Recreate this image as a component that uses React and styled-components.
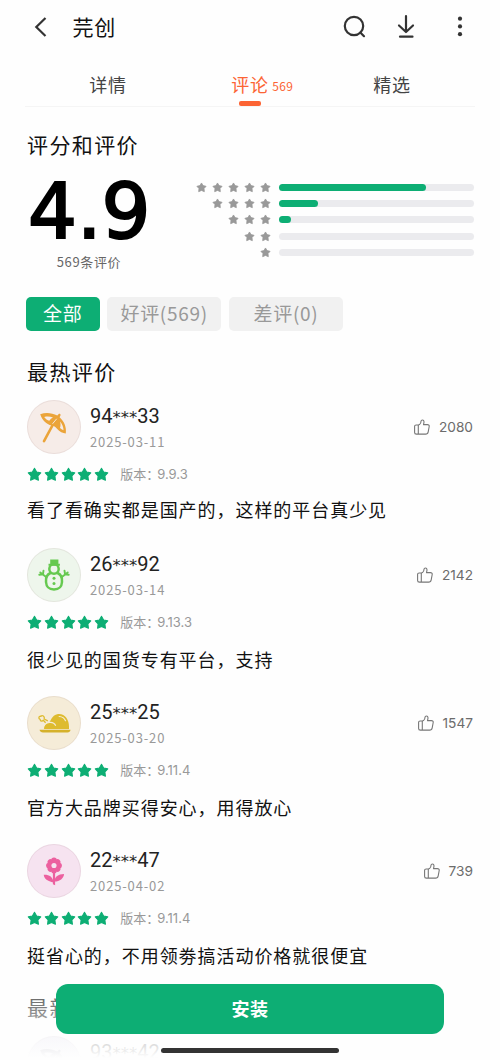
import React from "react";
import styled, { createGlobalStyle } from "styled-components";

const GREEN = "#0dae74";
const ORANGE = "#fc6434";

const GlobalStyle = createGlobalStyle`
  * { box-sizing: border-box; }
  body {
    margin: 0;
    background: #fefefe;
    font-family: "Noto Sans CJK SC", "Noto Sans", sans-serif;
    color: #111;
  }
`;

const Screen = styled.main`
  position: relative;
  width: 500px;
  height: 1060px;
  overflow: hidden;
  background: #fefefe;
`;

const Header = styled.header`
  display: flex;
  align-items: center;
  height: 54px;
  padding: 0 30px 0 34px;
`;

const AppName = styled.h1`
  flex: 1;
  margin: 0 0 2px 24.5px;
  font-size: 21px;
  line-height: 30px;
  font-weight: 400;
  letter-spacing: 0.8px;
`;

const Actions = styled.div`
  display: flex;
  align-items: center;
`;

const Action = styled.span`
  display: flex;
  margin-left: ${(p) => p.$gap}px;
`;

const Tabs = styled.nav`
  display: grid;
  grid-template-columns: repeat(3, 142px);
  justify-content: center;
  height: 53px;
  margin: 0 25px;
  border-bottom: 1px solid #f5f5f5;
`;

const Tab = styled.div`
  display: flex;
  flex-direction: column;
  align-items: center;
  justify-content: space-between;
  padding-top: 17px;
  color: ${(p) => (p.$active ? ORANGE : "#444")};
  &::after {
    content: "";
    width: 22px;
    height: 5px;
    border-radius: 2px;
    background: ${(p) => (p.$active ? ORANGE : "transparent")};
  }
`;

const TabLabel = styled.div`
  position: relative;
  font-size: 18px;
  line-height: 26px;
  letter-spacing: 0.7px;
`;

const TabCount = styled.span`
  position: absolute;
  left: 41px;
  top: 2px;
  font-size: 12px;
  letter-spacing: 0.3px;
`;

const SectionTitle = styled.h2`
  margin: 0;
  padding-left: 27px;
  font-size: 21px;
  line-height: 32px;
  font-weight: 400;
  letter-spacing: 1.4px;
  color: #111;
`;

const RatingTitle = styled(SectionTitle)`
  padding-top: 21px;
`;

const HotTitle = styled(SectionTitle)`
  padding-bottom: 13px;
`;

const LatestTitle = styled(SectionTitle)`
  padding-bottom: 13px;
  color: #333;
`;

const Summary = styled.section`
  display: flex;
  justify-content: space-between;
  height: 116px;
  padding: 0 26.5px 0 28px;
`;

const ScoreBlock = styled.div`
  display: flex;
  flex-direction: column;
  width: 122px;
`;

const Score = styled.div`
  height: 92px;
  padding-top: 6px;
  font-family: "DejaVu Sans", sans-serif;
  font-size: 77px;
  line-height: 92px;
  font-weight: 400;
  -webkit-text-stroke: 2.2px #000;
  white-space: nowrap;
  color: #000;
`;

const ScoreCaption = styled.div`
  text-align: center;
  font-size: 13px;
  line-height: 20px;
  letter-spacing: 0.65px;
  color: #666;
`;

const Distribution = styled.div`
  display: flex;
  flex-direction: column;
  padding-top: 19px;
`;

const DistributionRow = styled.div`
  display: flex;
  align-items: center;
  justify-content: flex-end;
  gap: 8px;
  height: 16.4px;
`;

const StarRow = styled.div`
  display: flex;
  align-items: center;
  gap: ${(p) => p.$gap}px;
`;

const Track = styled.div`
  width: 194.5px;
  height: 7px;
  border-radius: 4px;
  background: #ebebee;
`;

const Fill = styled.div`
  height: 7px;
  border-radius: 4px;
  background: ${GREEN};
`;

const Filters = styled.div`
  display: flex;
  gap: 7.5px;
  margin-top: 21px;
  padding-left: 26px;
`;

const Filter = styled.button`
  width: ${(p) => (p.$active ? 73.5 : 114.3)}px;
  height: 34px;
  padding: 0 0 2px;
  border: 0;
  border-radius: 5px;
  font-family: inherit;
  font-size: 19px;
  line-height: 30px;
  letter-spacing: 0.7px;
  color: ${(p) => (p.$active ? "#fff" : "#999")};
  background: ${(p) => (p.$active ? GREEN : "#f1f1f1")};
`;

const HotSection = styled.section`
  padding-top: 24px;
`;

const Review = styled.article`
  height: 148px;
  padding: 0 27px 0 26.5px;
`;

const ReviewHead = styled.div`
  display: flex;
  height: 54px;
`;

const Avatar = styled.div`
  display: flex;
  align-items: center;
  justify-content: center;
  width: 54px;
  height: 54px;
  border: 1px solid rgba(120, 80, 80, 0.09);
  border-radius: 50%;
  background: ${(p) => p.$bg};
`;

const Author = styled.div`
  flex: 1;
  padding-left: 9.5px;
`;

const UserName = styled.div`
  height: 29px;
  padding-top: 3px;
  font-family: Roboto, "Noto Sans CJK SC", sans-serif;
  font-size: 20px;
  line-height: 26px;
  color: #222;
`;

const Mask = styled.span`
  font-family: "DejaVu Sans", sans-serif;
  font-size: 16.5px;
  line-height: 20px;
`;

const ReviewDate = styled.div`
  padding-top: 3px;
  font-size: 13px;
  line-height: 20px;
  letter-spacing: 0.85px;
  color: #999;
`;

const Likes = styled.div`
  display: flex;
  align-items: center;
  gap: 9px;
  font-family: Inter, sans-serif;
  font-size: 13.7px;
  color: #6c6c6c;
`;

const Meta = styled.div`
  display: flex;
  align-items: center;
  height: 20px;
  margin-top: 10px;
  padding-left: 0.5px;
`;

const Version = styled.div`
  display: flex;
  margin-left: 11px;
  font-size: 13px;
  line-height: 20px;
  color: #999;
`;

const VersionNumber = styled.span`
  margin-left: -2px;
  font-family: Inter, sans-serif;
  font-size: 13px;
`;

const Comment = styled.p`
  margin: ${(p) => p.$top}px 0 0 0.5px;
  font-size: 18px;
  line-height: 28px;
  letter-spacing: 0.95px;
  white-space: nowrap;
  color: #111;
`;

const Latest = styled.section`
  margin-top: -1px;
`;

const BottomBar = styled.footer`
  position: absolute;
  left: 0;
  right: 0;
  bottom: 0;
  display: flex;
  flex-direction: column;
  align-items: center;
  height: 90px;
  padding-top: 14px;
  background: linear-gradient(
    to bottom,
    rgba(254, 254, 254, 0) 0,
    rgba(254, 254, 254, 0.35) 35px,
    rgba(254, 254, 254, 0.8) 70px,
    rgba(254, 254, 254, 1) 88px
  );
`;

const InstallButton = styled.button`
  width: 388.5px;
  height: 49.5px;
  padding: 0 0 1px;
  border: 0;
  border-radius: 12px;
  font-family: inherit;
  font-size: 18px;
  font-weight: 700;
  letter-spacing: 0.5px;
  color: #fff;
  background: ${GREEN};
`;

const HomeIndicator = styled.div`
  width: 178px;
  height: 4.5px;
  margin-top: 14.5px;
  border-radius: 3px;
  background: #333;
`;

const Star = ({ size, color }) => (
  <svg width={size} height={size} viewBox="0 0 24 24">
    <path
      d="M12 2.100L15.400 7.900 22 9.400 17.500 14.400 18.200 21.100 12 18.400 5.800 21.100 6.500 14.400 2 9.400 8.600 7.900z"
      fill={color}
      stroke={color}
      strokeWidth="1.700"
      strokeLinejoin="round"
    />
  </svg>
);

const Stars = ({ count, size, gap, color }) => (
  <StarRow $gap={gap}>
    {Array.from({ length: count }, (_, i) => (
      <Star key={i} size={size} color={color} />
    ))}
  </StarRow>
);

const BackIcon = () => (
  <svg width="14" height="20" viewBox="0 0 14 20" fill="none">
    <path d="M11.500 1L2.300 10l9.200 9" stroke="#333" strokeWidth="2.200" />
  </svg>
);

const SearchIcon = () => (
  <svg width="24" height="24" viewBox="0 0 24 24" fill="none" stroke="#333" strokeWidth="2.200" strokeLinecap="round">
    <circle cx="11" cy="11" r="9.200" />
    <path d="M17.300 17.500l3.700 3.700" />
  </svg>
);

const DownloadIcon = () => (
  <svg width="20" height="24" viewBox="0 0 20 24" fill="none" stroke="#333" strokeWidth="2.200" strokeLinecap="round">
    <path d="M10 1.200v15.500M3 10.500l7 6.500 7-6.500" strokeLinejoin="round" />
    <path d="M4 21.700h12.500" />
  </svg>
);

const MoreIcon = () => (
  <svg width="20" height="24" viewBox="0 0 20 24" fill="#333">
    <circle cx="10" cy="3.700" r="2.100" />
    <circle cx="10" cy="11.400" r="2.100" />
    <circle cx="10" cy="19.200" r="2.100" />
  </svg>
);

const ThumbIcon = () => (
  <svg width="16" height="17" viewBox="0 0 16 17" fill="none" stroke="#777" strokeWidth="1.100" strokeLinejoin="round">
    <path d="M4.300 6l1.200-.4C6.800 4.700 7 3.400 7 2.300 7 .6 9.900.2 10 2.700c0 1.200-.3 2-.5 2.900h3.900c1.300 0 2 .8 1.800 1.900l-1 5.300c-.3 1.600-1.200 2.300-2.600 2.300H2.400c-1.200 0-1.800-.6-1.800-1.700V7.600C.6 6.600 1.200 6 2.200 6z" />
    <path d="M4.300 6v9.100" />
  </svg>
);

const UmbrellaIcon = ({ color = "#eba43a", cut = "#f6ece8" }) => (
  <svg width="32" height="32" viewBox="0 0 32 32">
    <path d="M15.500 12.500L6 30.200" stroke={color} strokeWidth="2.600" strokeLinecap="round" />
    <path
      d="M2.200 3.200C8 1.300 14 1.900 19.300 4.600l1.900-2 1.600 1.200-1.200 2.400c4.700 4.300 7 9.800 6.200 16.200-3-.1-6.100-1.600-8.800-4.600-1.500-2-3-3-5.500-3.400C8.500 13.400 4.300 9.200 2.200 3.200z"
      fill={color}
    />
    <path d="M6.200 6c3.200-.8 6.200-.5 8.800.6-1.500.7-2.700 1.800-3.700 3.200C9.300 9.200 7.500 7.900 6.200 6zM22 10.500c2.300 2.600 3.500 5.700 3.500 8.700-1.300-.5-2.500-1.200-3.500-2.100.7-2.200.7-4.400 0-6.600z" fill={cut} />
    <path d="M18.700 7.800l-4.200 5" stroke={cut} strokeWidth="0.900" />
  </svg>
);

const SnowmanIcon = () => (
  <svg width="32" height="32" viewBox="0 0 32 32" fill="none" stroke="#66c950" strokeWidth="2.500" strokeLinecap="round">
    <path d="M12.200.5h8.200v4.200h1.500v2H10.500v-2h1.700z" fill="#66c950" stroke="none" />
    <circle cx="16" cy="10" r="4.700" />
    <path d="M12.500 14c-3.700 1.500-4.900 4.500-4.500 9 .4 5.300 2.500 7.400 8 7.400s7.600-2.100 8-7.400c.4-4.500-.8-7.500-4.500-9" />
    <path d="M8.500 18.300L2.300 13.400M5 15.200l-3.700.6M5 15.200l.5-3.600M23.500 18.300l6.200-4.900M27 15.200l3.700.6M27 15.200l-.5-3.600" strokeWidth="1.900" />
    <circle cx="16" cy="19.300" r="1.500" fill="#66c950" stroke="none" />
    <circle cx="16" cy="24.500" r="1.500" fill="#66c950" stroke="none" />
  </svg>
);

const RoastIcon = () => (
  <svg width="34" height="24" viewBox="0 0 34 24">
    <path d="M10.500 13C14 11.500 14 4 21 3c7-.6 11 5.500 11 12.500v2.500H6.800z" fill="#debb2f" />
    <path d="M6.300 18c.2-3.500 2.700-6.200 6.200-6.600 3-.3 5.200 1 6.200 3.300" fill="#debb2f" stroke="#f5ecd8" strokeWidth="1.100" />
    <path d="M10.800 9.800L7.200 8C8 5.200 5.200 3.800 3.900 5.300 1.600 4.800 1.200 7.500 3.100 8.300c.3 2.300 2.400 2.100 3.200.9l2.300 2.600" fill="none" stroke="#debb2f" strokeWidth="1.300" strokeLinejoin="round" />
    <path d="M22.200 5.500c3 .2 5.200 1.700 6.300 4.200" fill="none" stroke="#f5ecd8" strokeWidth="1.200" strokeLinecap="round" />
    <path d="M2.500 18.800h31c-.2 1.900-1.400 2.700-3 2.700H6c-1.800 0-3-.8-3.500-2.700z" fill="#d5b12b" />
  </svg>
);

const FlowerIcon = () => (
  <svg width="22" height="30" viewBox="0 0 24 32" fill="#ec609f">
    <g>
      {[0, 45, 90, 135, 180, 225, 270, 315].map((a) => (
        <circle key={a} cx="12" cy="4.500" r="3.100" transform={`rotate(${a} 12 10)`} />
      ))}
      <circle cx="12" cy="10" r="6.300" />
    </g>
    <circle cx="12" cy="10" r="2.800" fill="#f6e3f0" />
    <path d="M10.800 17h2.400v14.500l-2.400-1z" />
    <path d="M11.500 28.500C5 27.500 1.200 24.500.8 20.200c5.700-.3 10.200 2.300 10.700 8.300zM12.500 27.500c.2-5.300 4-8.300 10.500-8.300-.5 5-4.500 8-10.500 8.300z" />
  </svg>
);

const levels = [
  { stars: 5, value: 147 },
  { stars: 4, value: 39 },
  { stars: 3, value: 12 },
  { stars: 2, value: 0 },
  { stars: 1, value: 0 },
];

const reviews = [
  { name: ["94", "33"], date: "2025-03-11", likes: 2080, version: "9.9.3", text: "看了看确实都是国产的，这样的平台真少见", bg: "#f6ece8", icon: <UmbrellaIcon />, top: 10.5 },
  { name: ["26", "92"], date: "2025-03-14", likes: 2142, version: "9.13.3", text: "很少见的国货专有平台，支持", bg: "#eef6ec", icon: <SnowmanIcon />, top: 12.5 },
  { name: ["25", "25"], date: "2025-03-20", likes: 1547, version: "9.11.4", text: "官方大品牌买得安心，用得放心", bg: "#f5ecd8", icon: <RoastIcon />, top: 12.5 },
  { name: ["22", "47"], date: "2025-04-02", likes: 739, version: "9.11.4", text: "挺省心的，不用领劵搞活动价格就很便宜", bg: "#f6e3f0", icon: <FlowerIcon />, top: 12.5 },
];

const ReviewHeader = ({ item }) => (
  <ReviewHead>
    <Avatar $bg={item.bg}>{item.icon}</Avatar>
    <Author>
      <UserName>
        {item.name[0]}
        <Mask>***</Mask>
        {item.name[1]}
      </UserName>
      {item.date && <ReviewDate>{item.date}</ReviewDate>}
    </Author>
    {item.likes && (
      <Likes>
        <ThumbIcon />
        <span>{item.likes}</span>
      </Likes>
    )}
  </ReviewHead>
);

const ReviewItem = ({ item }) => (
  <Review>
    <ReviewHeader item={item} />
    <Meta>
      <Stars count={5} size={15} gap={1.8} color={GREEN} />
      <Version>
        版本：<VersionNumber>{item.version}</VersionNumber>
      </Version>
    </Meta>
    <Comment $top={item.top}>{item.text}</Comment>
  </Review>
);

export default function App() {
  return (
    <>
      <GlobalStyle />
      <Screen>
        <Header>
          <BackIcon />
          <AppName>芫创</AppName>
          <Actions>
            <Action $gap={0}><SearchIcon /></Action>
            <Action $gap={29}><DownloadIcon /></Action>
            <Action $gap={34}><MoreIcon /></Action>
          </Actions>
        </Header>
        <Tabs>
          <Tab><TabLabel>详情</TabLabel></Tab>
          <Tab $active>
            <TabLabel>评论<TabCount>569</TabCount></TabLabel>
          </Tab>
          <Tab><TabLabel>精选</TabLabel></Tab>
        </Tabs>
        <RatingTitle>评分和评价</RatingTitle>
        <Summary>
          <ScoreBlock>
            <Score>4.9</Score>
            <ScoreCaption>569条评价</ScoreCaption>
          </ScoreBlock>
          <Distribution>
            {levels.map((l) => (
              <DistributionRow key={l.stars}>
                <Stars count={l.stars} size={11} gap={5} color="#999" />
                <Track>
                  <Fill style={{ width: l.value }} />
                </Track>
              </DistributionRow>
            ))}
          </Distribution>
        </Summary>
        <Filters>
          <Filter $active>全部</Filter>
          <Filter>好评(569)</Filter>
          <Filter>差评(0)</Filter>
        </Filters>
        <HotSection>
          <HotTitle>最热评价</HotTitle>
          {reviews.map((r) => (
            <ReviewItem key={r.date} item={r} />
          ))}
        </HotSection>
        <Latest>
          <LatestTitle>最新评价</LatestTitle>
          <Review>
            <ReviewHeader
              item={{ name: ["93", "42"], bg: "#e6e4f0", icon: <UmbrellaIcon color="#88879c" cut="#e6e4f0" /> }}
            />
          </Review>
        </Latest>
        <BottomBar>
          <InstallButton>安装</InstallButton>
          <HomeIndicator />
        </BottomBar>
      </Screen>
    </>
  );
}
